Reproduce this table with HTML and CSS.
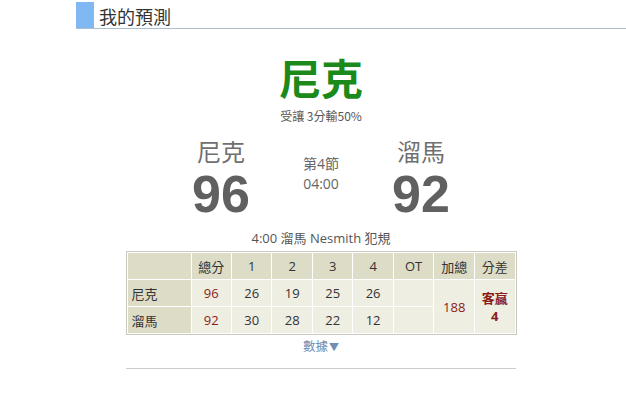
FILE: index.html
```html
<!DOCTYPE html>
<html lang="zh-Hant">
<head>
<meta charset="utf-8">
<link rel="stylesheet" href="styles.css">
</head>
<body>
<div class="page">
  <div class="head">
    <span class="head-mark"></span>
    <h2 class="head-title">我的預測</h2>
  </div>
  <div class="content">
    <div class="pick">尼克</div>
    <div class="odds">受讓 3分輸50%</div>
    <div class="board">
      <div class="team">
        <div class="team-name">尼克</div>
        <div class="team-score">96</div>
      </div>
      <div class="mid">
        <div>第4節</div>
        <div>04:00</div>
      </div>
      <div class="team">
        <div class="team-name">溜馬</div>
        <div class="team-score">92</div>
      </div>
    </div>
    <div class="event">4:00 溜馬 Nesmith 犯規</div>
    <table class="stats">
      <tr class="hrow">
        <th class="lbl"></th><th>總分</th><th>1</th><th>2</th><th>3</th><th>4</th><th>OT</th><th>加總</th><th>分差</th>
      </tr>
      <tr>
        <th class="lbl">尼克</th><td class="red">96</td><td>26</td><td>19</td><td>25</td><td>26</td><td></td>
        <td rowspan="2" class="red">188</td><td rowspan="2" class="red strong">客贏<br>4</td>
      </tr>
      <tr>
        <th class="lbl">溜馬</th><td class="red">92</td><td>30</td><td>28</td><td>22</td><td>12</td><td></td>
      </tr>
    </table>
    <div class="more">數據<span class="tri">▼</span></div>
    <div class="rule"></div>
  </div>
</div>
</body>
</html>
```
FILE: styles.css
```css
html, body { margin: 0; padding: 0; background: #fff; }
body { font-family: "Open Sans", "Noto Sans CJK TC", sans-serif; color: #555; }
.page { padding-left: 76px; padding-top: 2px; }
.head { display: flex; align-items: stretch; height: 26px; border-bottom: 1px solid #a9c0d3; }
.head-mark { width: 18px; background: #80b8f4; }
.head-title { margin: 0 0 0 5px; font-weight: normal; font-size: 18px; line-height: 28px; color: #333; font-family: "Noto Sans CJK TC", sans-serif; }
.content { width: 490px; display: flex; flex-direction: column; align-items: center; }
.pick { margin-top: 20px; font-family: "Noto Sans CJK TC", sans-serif; font-weight: bold; font-size: 42px; line-height: 56px; color: #1b8a1b; }
.odds { font-size: 12px; line-height: 16px; color: #555; font-family: "Noto Sans CJK TC", sans-serif; margin-top: 3px; }
.board { display: flex; margin-top: 10px; align-items: flex-start; }
.team { width: 100px; display: flex; flex-direction: column; align-items: center; color: #666; }
.team-name { font-family: "Noto Sans CJK TC", sans-serif; font-size: 24px; line-height: 34px; color: #707070; }
.team-score { font-family: "Liberation Sans", Arial, sans-serif; font-weight: bold; font-size: 52px; line-height: 56px; color: #606060; margin-top: -2px; }
.mid { width: 100px; display: flex; flex-direction: column; align-items: center; margin-top: 20px; font-size: 14px; line-height: 20px; color: #666; font-family: "Open Sans", "Noto Sans CJK TC", sans-serif; }
.event { margin-top: 7px; font-size: 13px; line-height: 18px; color: #555; font-family: "Open Sans", "Noto Sans CJK TC", sans-serif; }
.stats { margin-top: 4px; border: 1px solid #c9c9c0; border-spacing: 1px; background: #fff; width: 391px; font-size: 13px; font-family: "Open Sans", "Noto Sans CJK TC", sans-serif; color: #333; }
.stats th, .stats td { padding: 0; height: 26px; text-align: center; font-weight: normal; }
.stats td { background: #eeeee3; width: 40px; }
.stats th { background: #dddcc7; width: 40px; }
.stats th.lbl { width: 60px; text-align: left; padding-left: 4px; }
.stats .red { color: #8c1c1c; }
.stats .strong { font-weight: bold; line-height: 18px; }
.more { margin-top: 2px; font-size: 12.5px; line-height: 18px; color: #6e8eb4; font-family: "Noto Sans CJK TC", sans-serif; }
.tri { font-size: 10px; margin-left: 1px; }
.rule { width: 390px; border-top: 1px solid #ccc; margin-top: 12px; }
```
